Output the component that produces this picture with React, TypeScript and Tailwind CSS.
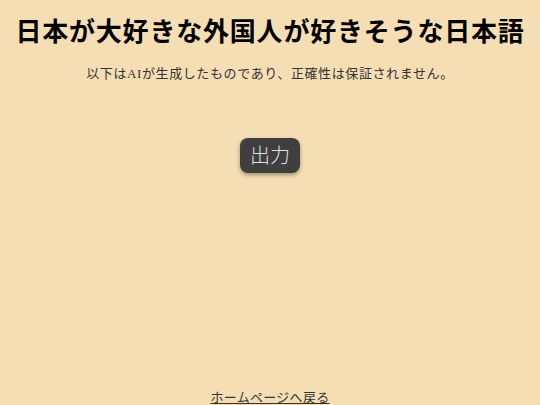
export default function App() {
  return (
    <div
      className="h-[405px] flex flex-col items-center bg-[#f5deb3] text-[#222] overflow-hidden"
      style={{ fontFamily: '"Liberation Serif", "Noto Sans CJK JP", serif' }}
    >
      <h1 className="mt-[14px] text-[26px] leading-[38px] font-semibold tracking-[0.8px] text-black whitespace-nowrap">
        日本が大好きな外国人が好きそうな日本語
      </h1>
      <p className="mt-[13px] text-[13px] leading-[18px] tracking-[0.6px] text-[#333]">
        以下はAIが生成したものであり、正確性は保証されません。
      </p>
      <button className="mt-[55px] px-[10px] h-[35px] rounded-[8px] bg-[#3f3f3f] text-[#e0e0e0] text-[20px] font-light shadow-[0_2px_4px_rgba(0,0,0,0.35)]">
        出力
      </button>
      <div className="flex-1" />
      <a href="#" className="mb-[-2px] text-[13px] leading-[18px] tracking-[0.3px] text-[#333] underline">
        ホームページへ戻る
      </a>
    </div>
  );
}
